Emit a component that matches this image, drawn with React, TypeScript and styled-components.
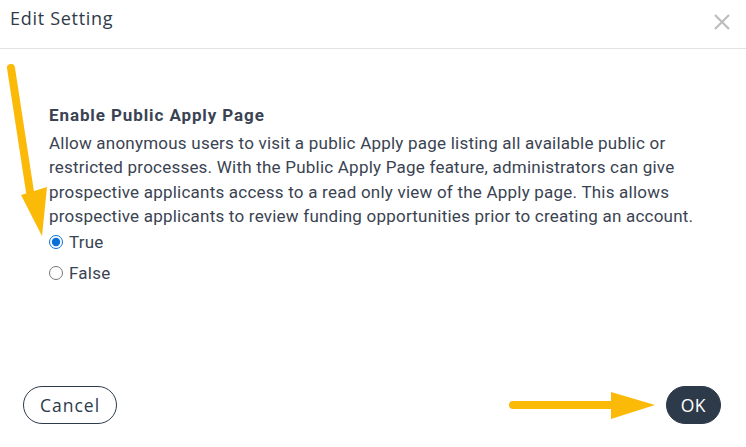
import React, { useState } from "react";
import styled, { createGlobalStyle } from "styled-components";

const Global = createGlobalStyle`
  html, body { margin: 0; padding: 0; background: #fff; }
  body { width: 746px; height: 447px; overflow: hidden; }
`;

const Dialog = styled.div`
  position: relative;
  width: 746px;
  height: 447px;
  display: flex;
  flex-direction: column;
  background: #fff;
`;

const Header = styled.div`
  display: flex;
  align-items: center;
  justify-content: space-between;
  padding: 0 14px 0 10px;
  border-bottom: 1px solid #e3e3e3;
  box-sizing: border-box;
  height: 49px;
`;

const Title = styled.h1`
  margin: 0;
  margin-top: -12px;
  font-family: "Open Sans", sans-serif;
  font-weight: 400;
  font-size: 18px;
  color: #2f3a4a;
  letter-spacing: 0.7px;
`;

const Close = styled.button`
  border: 0;
  background: none;
  padding: 0;
  width: 20px;
  height: 20px;
  display: flex;
  align-items: center;
  justify-content: center;
  cursor: pointer;
  margin-top: -4px;
`;

const Body = styled.div`
  flex: 1;
  padding: 54px 20px 0 49px;
  font-family: Roboto, sans-serif;
  color: #3a4352;
`;

const SettingName = styled.h2`
  margin: 0 0 4px 0;
  font-size: 17px;
  font-weight: 700;
  line-height: 24px;
  letter-spacing: 0.9px;
`;

const Description = styled.p`
  margin: 0;
  font-size: 17px;
  line-height: 24.3px;
  letter-spacing: 0.22px;
  white-space: nowrap;
`;

const Options = styled.div`
  display: flex;
  flex-direction: column;
  gap: 9px;
  margin-top: 3px;
`;

const Option = styled.label`
  display: flex;
  align-items: center;
  gap: 6px;
  font-size: 17px;
  letter-spacing: 0.22px;
  line-height: 22px;
  cursor: pointer;
`;

const Radio = styled.input`
  margin: 0;
  width: 14px;
  height: 14px;
  accent-color: #0a6fd6;
`;

const Footer = styled.div`
  display: flex;
  justify-content: space-between;
  align-items: center;
  padding: 0 25px 23px 23px;
`;

const Button = styled.button<{ $primary?: boolean }>`
  height: 38px;
  border-radius: 19px;
  font-family: "Open Sans", sans-serif;
  font-size: 17.5px;
  letter-spacing: ${(p) => (p.$primary ? "0.4px" : "1px")};
  padding: 0 14px;
  border: 1px solid #2d3a4a;
  background: ${(p) => (p.$primary ? "#2d3a4a" : "#fff")};
  color: ${(p) => (p.$primary ? "#fff" : "#2d3a4a")};
  cursor: pointer;
  min-width: ${(p) => (p.$primary ? "55px" : "94px")};
`;

const Overlay = styled.svg`
  position: absolute;
  left: 0;
  top: 0;
  pointer-events: none;
`;

export default function App() {
  const [value, setValue] = useState("true");
  return (
    <>
      <Global />
      <Dialog>
        <Header>
          <Title>Edit Setting</Title>
          <Close aria-label="Close">
            <svg width="16" height="16" viewBox="0 0 16 16">
              <path d="M1 1 L15 15 M15 1 L1 15" stroke="#bdbdbd" strokeWidth="2.2" />
            </svg>
          </Close>
        </Header>
        <Body>
          <SettingName>Enable Public Apply Page</SettingName>
          <Description>
            Allow anonymous users to visit a public Apply page listing all available public or
            <br />
            restricted processes. With the Public Apply Page feature, administrators can give
            <br />
            prospective applicants access to a read only view of the Apply page. This allows
            <br />
            prospective applicants to review funding opportunities prior to creating an account.
          </Description>
          <Options>
            <Option>
              <Radio type="radio" name="v" checked={value === "true"} onChange={() => setValue("true")} />
              True
            </Option>
            <Option>
              <Radio type="radio" name="v" checked={value === "false"} onChange={() => setValue("false")} />
              False
            </Option>
          </Options>
        </Body>
        <Footer>
          <Button>Cancel</Button>
          <Button $primary>OK</Button>
        </Footer>
        <Overlay width="746" height="447" viewBox="0 0 746 447">
          <line x1="11" y1="68" x2="30" y2="192" stroke="#fbb908" strokeWidth="8" strokeLinecap="round" />
          <polygon points="21,195 47,187 42,236" fill="#fbb908" />
          <line x1="513" y1="405" x2="612" y2="405" stroke="#fbb908" strokeWidth="8" strokeLinecap="round" />
          <polygon points="611,392 611,419 655,405" fill="#fbb908" />
        </Overlay>
      </Dialog>
    </>
  );
}
